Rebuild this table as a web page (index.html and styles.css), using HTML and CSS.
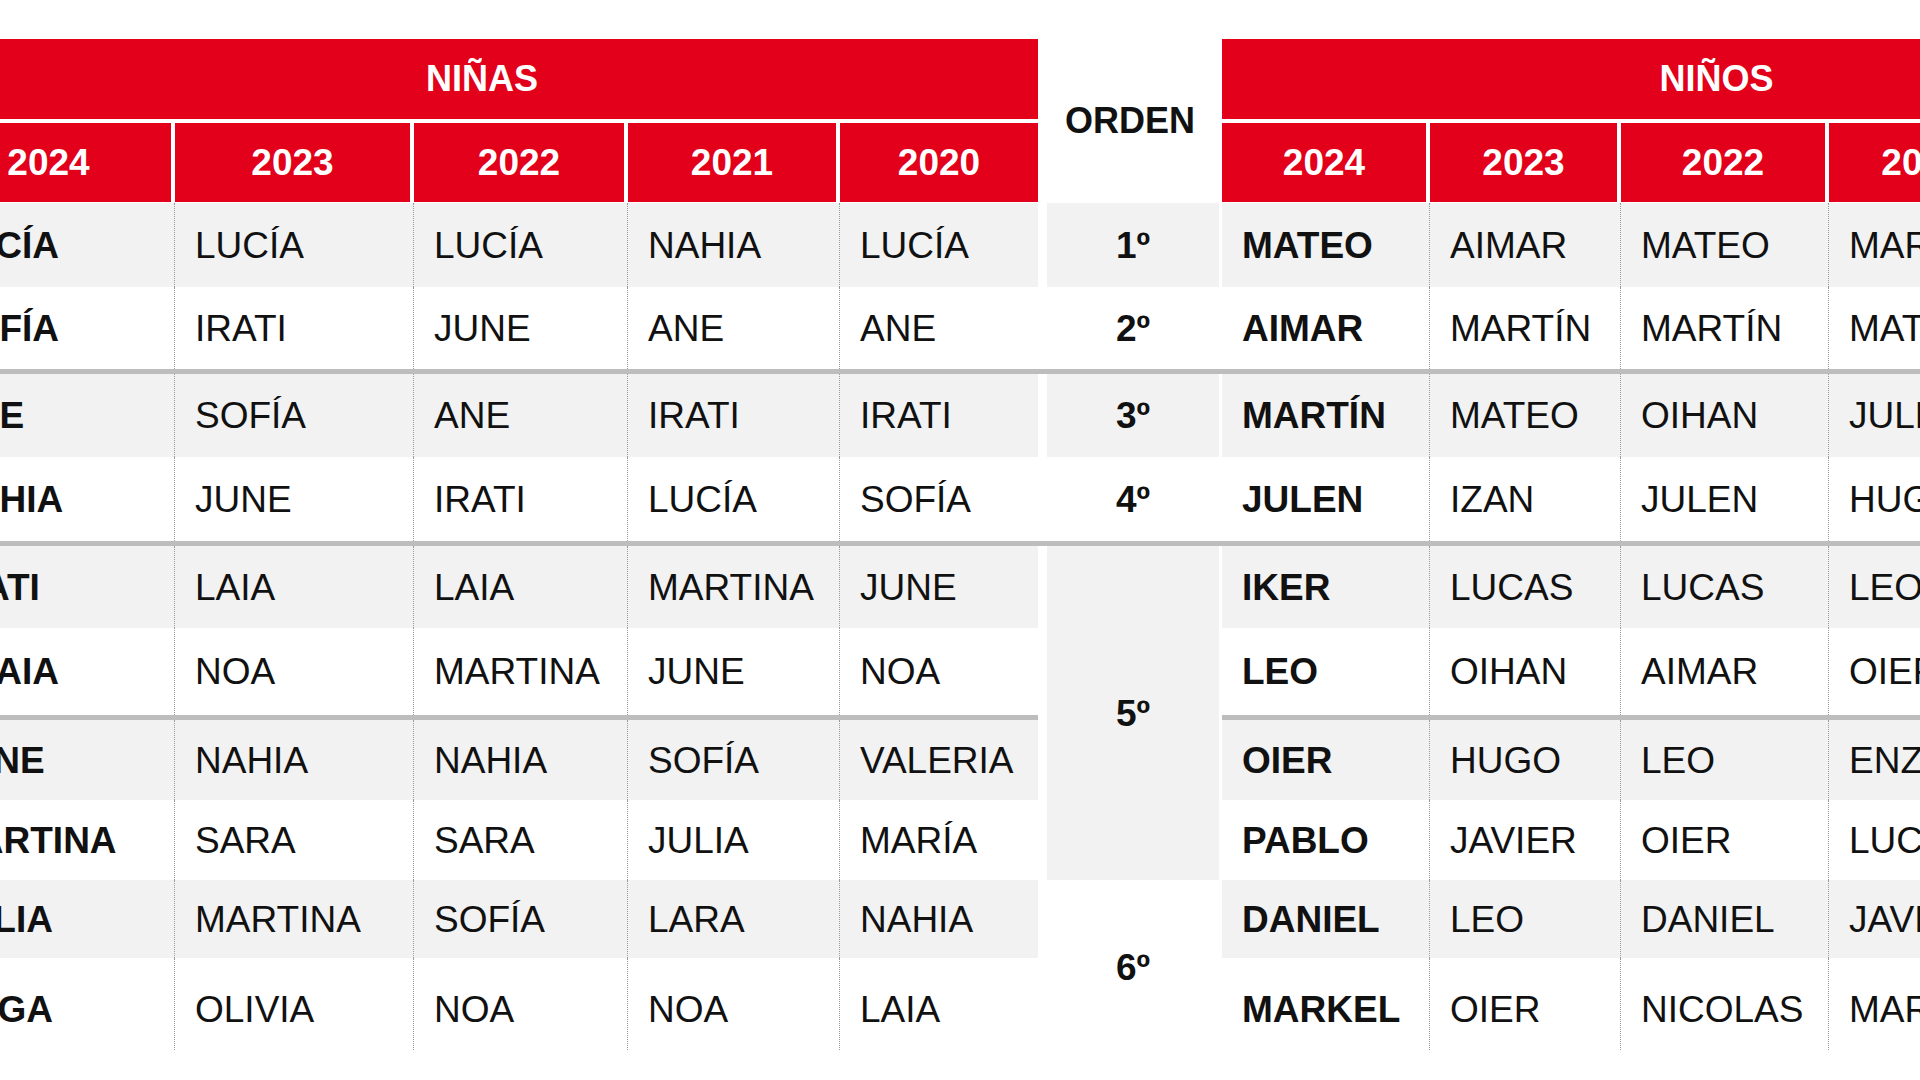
FILE: index.html
```html
<!DOCTYPE html>
<html lang="es">
<head>
<meta charset="utf-8">
<title>Nombres más frecuentes</title>
<link rel="stylesheet" href="styles.css">
</head>
<body>
<div class="page">
  <div class="board">
    <div class="band band-left">NIÑAS</div>
    <div class="orden-head">ORDEN</div>
    <div class="band band-right">NIÑOS</div>

    <div class="year">2024</div><div class="year">2023</div><div class="year">2022</div><div class="year">2021</div><div class="year edge">2020</div>
    <div class="year">2024</div><div class="year">2023</div><div class="year">2022</div><div class="year">2021</div><div class="year">2020</div>

    <!-- 1 -->
    <div class="cell alt lead">LUCÍA</div><div class="cell alt">LUCÍA</div><div class="cell alt">LUCÍA</div><div class="cell alt">NAHIA</div><div class="cell alt edge">LUCÍA</div>
    <div class="ord alt"><span>1º</span></div>
    <div class="cell alt lead">MATEO</div><div class="cell alt">AIMAR</div><div class="cell alt">MATEO</div><div class="cell alt">MARTÍN</div><div class="cell alt">MARTÍN</div>
    <!-- 2 -->
    <div class="cell lead">SOFÍA</div><div class="cell">IRATI</div><div class="cell">JUNE</div><div class="cell">ANE</div><div class="cell edge">ANE</div>
    <div class="ord"><span>2º</span></div>
    <div class="cell lead">AIMAR</div><div class="cell">MARTÍN</div><div class="cell">MARTÍN</div><div class="cell">MATEO</div><div class="cell">MATEO</div>

    <div class="rule rule-full"></div>

    <!-- 3 -->
    <div class="cell alt lead">ANE</div><div class="cell alt">SOFÍA</div><div class="cell alt">ANE</div><div class="cell alt">IRATI</div><div class="cell alt edge">IRATI</div>
    <div class="ord alt"><span>3º</span></div>
    <div class="cell alt lead">MARTÍN</div><div class="cell alt">MATEO</div><div class="cell alt">OIHAN</div><div class="cell alt">JULEN</div><div class="cell alt">JULEN</div>
    <!-- 4 -->
    <div class="cell lead">NAHIA</div><div class="cell">JUNE</div><div class="cell">IRATI</div><div class="cell">LUCÍA</div><div class="cell edge">SOFÍA</div>
    <div class="ord"><span>4º</span></div>
    <div class="cell lead">JULEN</div><div class="cell">IZAN</div><div class="cell">JULEN</div><div class="cell">HUGO</div><div class="cell">HUGO</div>

    <div class="rule rule-full"></div>

    <!-- 5 -->
    <div class="cell alt lead">IRATI</div><div class="cell alt">LAIA</div><div class="cell alt">LAIA</div><div class="cell alt">MARTINA</div><div class="cell alt edge">JUNE</div>
    <div class="ord alt ord-five"><span>5º</span></div>
    <div class="cell alt lead">IKER</div><div class="cell alt">LUCAS</div><div class="cell alt">LUCAS</div><div class="cell alt">LEO</div><div class="cell alt">LEO</div>
    <!-- 6 -->
    <div class="cell lead">ALAIA</div><div class="cell">NOA</div><div class="cell">MARTINA</div><div class="cell">JUNE</div><div class="cell edge">NOA</div>
    <div class="cell lead">LEO</div><div class="cell">OIHAN</div><div class="cell">AIMAR</div><div class="cell">OIER</div><div class="cell">OIER</div>

    <div class="rule rule-half"></div>
    <div class="rule rule-half"></div>

    <!-- 7 -->
    <div class="cell alt lead">JUNE</div><div class="cell alt">NAHIA</div><div class="cell alt">NAHIA</div><div class="cell alt">SOFÍA</div><div class="cell alt edge">VALERIA</div>
    <div class="cell alt lead">OIER</div><div class="cell alt">HUGO</div><div class="cell alt">LEO</div><div class="cell alt">ENZO</div><div class="cell alt">ENZO</div>
    <!-- 8 -->
    <div class="cell lead">MARTINA</div><div class="cell">SARA</div><div class="cell">SARA</div><div class="cell">JULIA</div><div class="cell edge">MARÍA</div>
    <div class="cell lead">PABLO</div><div class="cell">JAVIER</div><div class="cell">OIER</div><div class="cell">LUCAS</div><div class="cell">LUCAS</div>
    <!-- 9 -->
    <div class="cell alt lead">JULIA</div><div class="cell alt">MARTINA</div><div class="cell alt">SOFÍA</div><div class="cell alt">LARA</div><div class="cell alt edge">NAHIA</div>
    <div class="ord ord-six"><span>6º</span></div>
    <div class="cell alt lead">DANIEL</div><div class="cell alt">LEO</div><div class="cell alt">DANIEL</div><div class="cell alt">JAVIER</div><div class="cell alt">JAVIER</div>
    <!-- 10 -->
    <div class="cell last lead">OLGA</div><div class="cell last">OLIVIA</div><div class="cell last">NOA</div><div class="cell last">NOA</div><div class="cell last edge">LAIA</div>
    <div class="cell last lead">MARKEL</div><div class="cell last">OIER</div><div class="cell last">NICOLAS</div><div class="cell last">MARKEL</div><div class="cell last">MARKEL</div>
  </div>
</div>
</body>
</html>
```

FILE: styles.css
```css
html, body {
  margin: 0;
  padding: 0;
  background: #ffffff;
}

body {
  width: 1920px;
  height: 1080px;
  overflow: hidden;
  font-family: "Liberation Sans", Arial, sans-serif;
  color: #111111;
}

.page {
  padding-top: 39px;
  overflow: hidden;
  height: 1041px;
}

.board {
  display: grid;
  width: max-content;
  margin-left: -74px;
  grid-template-columns: 249px 239px 214px 212px 198px 184px 208px 191px 208px 191px 191px;
  grid-template-rows: 84px 80px 84px 82px 5px 83px 84px 5px 82px 87px 5px 80px 80px 78px 92px;
}

.band {
  grid-column: span 5;
  background: #e2001a;
  color: #ffffff;
  font-weight: bold;
  font-size: 36px;
  line-height: 1;
  display: flex;
  align-items: center;
  justify-content: center;
  border-bottom: 4px solid #ffffff;
}

.orden-head {
  grid-row: span 2;
  display: flex;
  align-items: center;
  justify-content: center;
  font-weight: bold;
  font-size: 36px;
  line-height: 1;
  color: #111111;
}

.year {
  background: #e2001a;
  color: #ffffff;
  font-weight: bold;
  font-size: 37px;
  line-height: 1;
  display: flex;
  align-items: center;
  justify-content: center;
  border-right: 4px solid #ffffff;
  border-bottom: 1px solid #ffffff;
}

.year.edge {
  border-right: 0;
}

.cell {
  display: flex;
  align-items: center;
  padding-left: 20px;
  font-size: 37px;
  line-height: 1;
  white-space: nowrap;
  overflow: hidden;
  border-right: 1px dotted #9a9a9a;
  background: #ffffff;
}

.cell.alt {
  background: #f2f2f2;
}

.cell.edge {
  border-right: 0;
}

.cell.lead {
  font-weight: bold;
}

.cell.last {
  padding-top: 10px;
}

.ord {
  display: flex;
  align-items: center;
  justify-content: center;
  margin: 0 3px 0 9px;
  font-weight: bold;
  font-size: 37px;
  line-height: 1;
}

.ord.alt {
  background: #f2f2f2;
}

.ord-five {
  grid-row: span 5;
}

.ord-six {
  grid-row: span 2;
  padding-top: 4px;
}

.rule {
  background: #bdbdbd;
}

.rule-full {
  grid-column: span 11;
}

.rule-half {
  grid-column: span 5;
}
```
